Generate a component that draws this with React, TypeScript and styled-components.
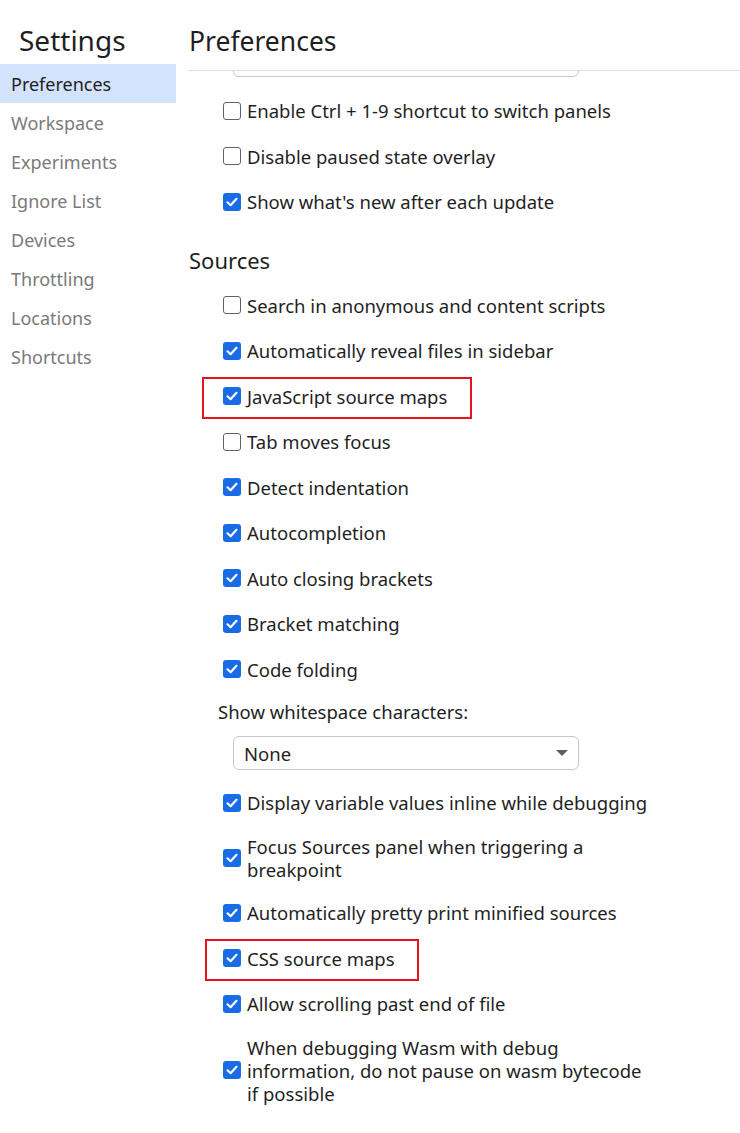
import * as React from "react"
import styled, { createGlobalStyle } from "styled-components"

const GlobalStyle = createGlobalStyle`
  html, body {
    margin: 0;
    padding: 0;
    background: #ffffff;
  }
  body {
    font-family: "Noto Sans", "Open Sans", sans-serif;
    color: #1f1f1f;
  }
`

const Page = styled.div`
  display: flex;
  width: 740px;
  height: 1133px;
  overflow: hidden;
`

const Sidebar = styled.nav`
  width: 176px;
  flex: none;
  margin-right: 12px;
`

const SidebarTitle = styled.h1`
  margin: 0;
  padding: 25px 0 0 19px;
  height: 64px;
  box-sizing: border-box;
  font-size: 28px;
  font-weight: 400;
  line-height: 30px;
`

const NavList = styled.ul`
  list-style: none;
  margin: 0;
  padding: 0;
`

const NavItem = styled.li<{ $active?: boolean }>`
  height: 39px;
  display: flex;
  align-items: center;
  padding-left: 11px;
  font-size: 18px;
  color: ${(p) => (p.$active ? "#1f1f1f" : "#7a7a7a")};
  background: ${(p) => (p.$active ? "#d3e3fd" : "transparent")};
`

const Main = styled.main`
  flex: 1;
  display: flex;
  flex-direction: column;
  min-width: 0;
`

const MainHeader = styled.header`
  height: 71px;
  box-sizing: border-box;
  border-bottom: 1px solid #d3e3fd;
  padding: 26px 0 0 1px;
  font-size: 26.5px;
  line-height: 30px;
`

// the settings list is scrolled a little: the top select is cut by the header
const Scroller = styled.div`
  flex: 1;
  overflow: hidden;
`

const Content = styled.div`
  margin-top: -28px;
`

const SectionTitle = styled.h2`
  margin: 20px 0 8px;
  padding-left: 1px;
  font-size: 22px;
  font-weight: 400;
  line-height: 30px;
`

const Row = styled.label`
  position: relative;
  display: flex;
  align-items: center;
  min-height: 45.5px;
  box-sizing: border-box;
  padding: 9.25px 0 9.25px 35px;
  font-size: 18.5px;
  line-height: 23px;
`

const Box = styled.span<{ $checked: boolean }>`
  flex: none;
  width: 18px;
  height: 18px;
  box-sizing: border-box;
  margin-right: 6px;
  border-radius: 3px;
  display: flex;
  align-items: center;
  justify-content: center;
  background: ${(p) => (p.$checked ? "#1a6ce6" : "#ffffff")};
  border: ${(p) => (p.$checked ? "none" : "1.5px solid #5f6368")};
`

const LabelText = styled.span`
  max-width: 403px;
`

const Highlight = styled.span<{ $left: number; $width: number }>`
  position: absolute;
  left: ${(p) => p.$left}px;
  top: 50%;
  margin-top: -19px;
  width: ${(p) => p.$width}px;
  height: 42px;
  box-sizing: border-box;
  border: 2px solid #e5141f;
  pointer-events: none;
`

const FieldLabel = styled.div`
  padding: 9px 0 13px 30px;
  font-size: 18.5px;
  line-height: 22px;
`

const SelectBox = styled.div`
  margin-left: 45px;
  width: 346px;
  height: 34px;
  box-sizing: border-box;
  border: 1px solid #c7c7c7;
  border-radius: 6px;
  display: flex;
  align-items: center;
  justify-content: space-between;
  padding: 0 10px 0 10px;
  font-size: 18.5px;
`

const Arrow = styled.span`
  width: 0;
  height: 0;
  border-left: 6px solid transparent;
  border-right: 6px solid transparent;
  border-top: 6px solid #5f5f5f;
`

const Gap = styled.div<{ $h: number }>`
  height: ${(p) => p.$h}px;
`

const Tick = () => (
  <svg width="14" height="14" viewBox="0 0 14 14">
    <path d="M2.5 7.3 L5.6 10.2 L11.5 3.8" fill="none" stroke="#ffffff" strokeWidth="2.2" strokeLinecap="round" strokeLinejoin="round" />
  </svg>
)

type CheckProps = {
  label: string
  checked?: boolean
  mark?: { left: number; width: number }
}

const Check = ({ label, checked = false, mark }: CheckProps) => (
  <Row>
    <Box $checked={checked}>{checked && <Tick />}</Box>
    <LabelText>{label}</LabelText>
    {mark && <Highlight $left={mark.left} $width={mark.width} />}
  </Row>
)

const navItems = [
  "Preferences",
  "Workspace",
  "Experiments",
  "Ignore List",
  "Devices",
  "Throttling",
  "Locations",
  "Shortcuts",
]

export default function App() {
  return (
    <>
      <GlobalStyle />
      <Page>
        <Sidebar>
          <SidebarTitle>Settings</SidebarTitle>
          <NavList>
            {navItems.map((item, i) => (
              <NavItem key={item} $active={i === 0}>
                {item}
              </NavItem>
            ))}
          </NavList>
        </Sidebar>
        <Main>
          <MainHeader>Preferences</MainHeader>
          <Scroller>
            <Content>
              <SelectBox aria-label="Theme" />
              <Gap $h={11} />
              <Check label="Enable Ctrl + 1-9 shortcut to switch panels" />
              <Check label="Disable paused state overlay" />
              <Check label="Show what's new after each update" checked />
              <SectionTitle>Sources</SectionTitle>
              <Check label="Search in anonymous and content scripts" />
              <Check label="Automatically reveal files in sidebar" checked />
              <Check label="JavaScript source maps" checked mark={{ left: 14, width: 270 }} />
              <Check label="Tab moves focus" />
              <Check label="Detect indentation" checked />
              <Check label="Autocompletion" checked />
              <Check label="Auto closing brackets" checked />
              <Check label="Bracket matching" checked />
              <Check label="Code folding" checked />
              <FieldLabel>Show whitespace characters:</FieldLabel>
              <SelectBox>
                <span>None</span>
                <Arrow />
              </SelectBox>
              <Gap $h={10} />
              <Check label="Display variable values inline while debugging" checked />
              <Check label="Focus Sources panel when triggering a breakpoint" checked />
              <Check label="Automatically pretty print minified sources" checked />
              <Check label="CSS source maps" checked mark={{ left: 17, width: 214 }} />
              <Check label="Allow scrolling past end of file" checked />
              <Check
                label="When debugging Wasm with debug information, do not pause on wasm bytecode if possible"
                checked
              />
            </Content>
          </Scroller>
        </Main>
      </Page>
    </>
  )
}
